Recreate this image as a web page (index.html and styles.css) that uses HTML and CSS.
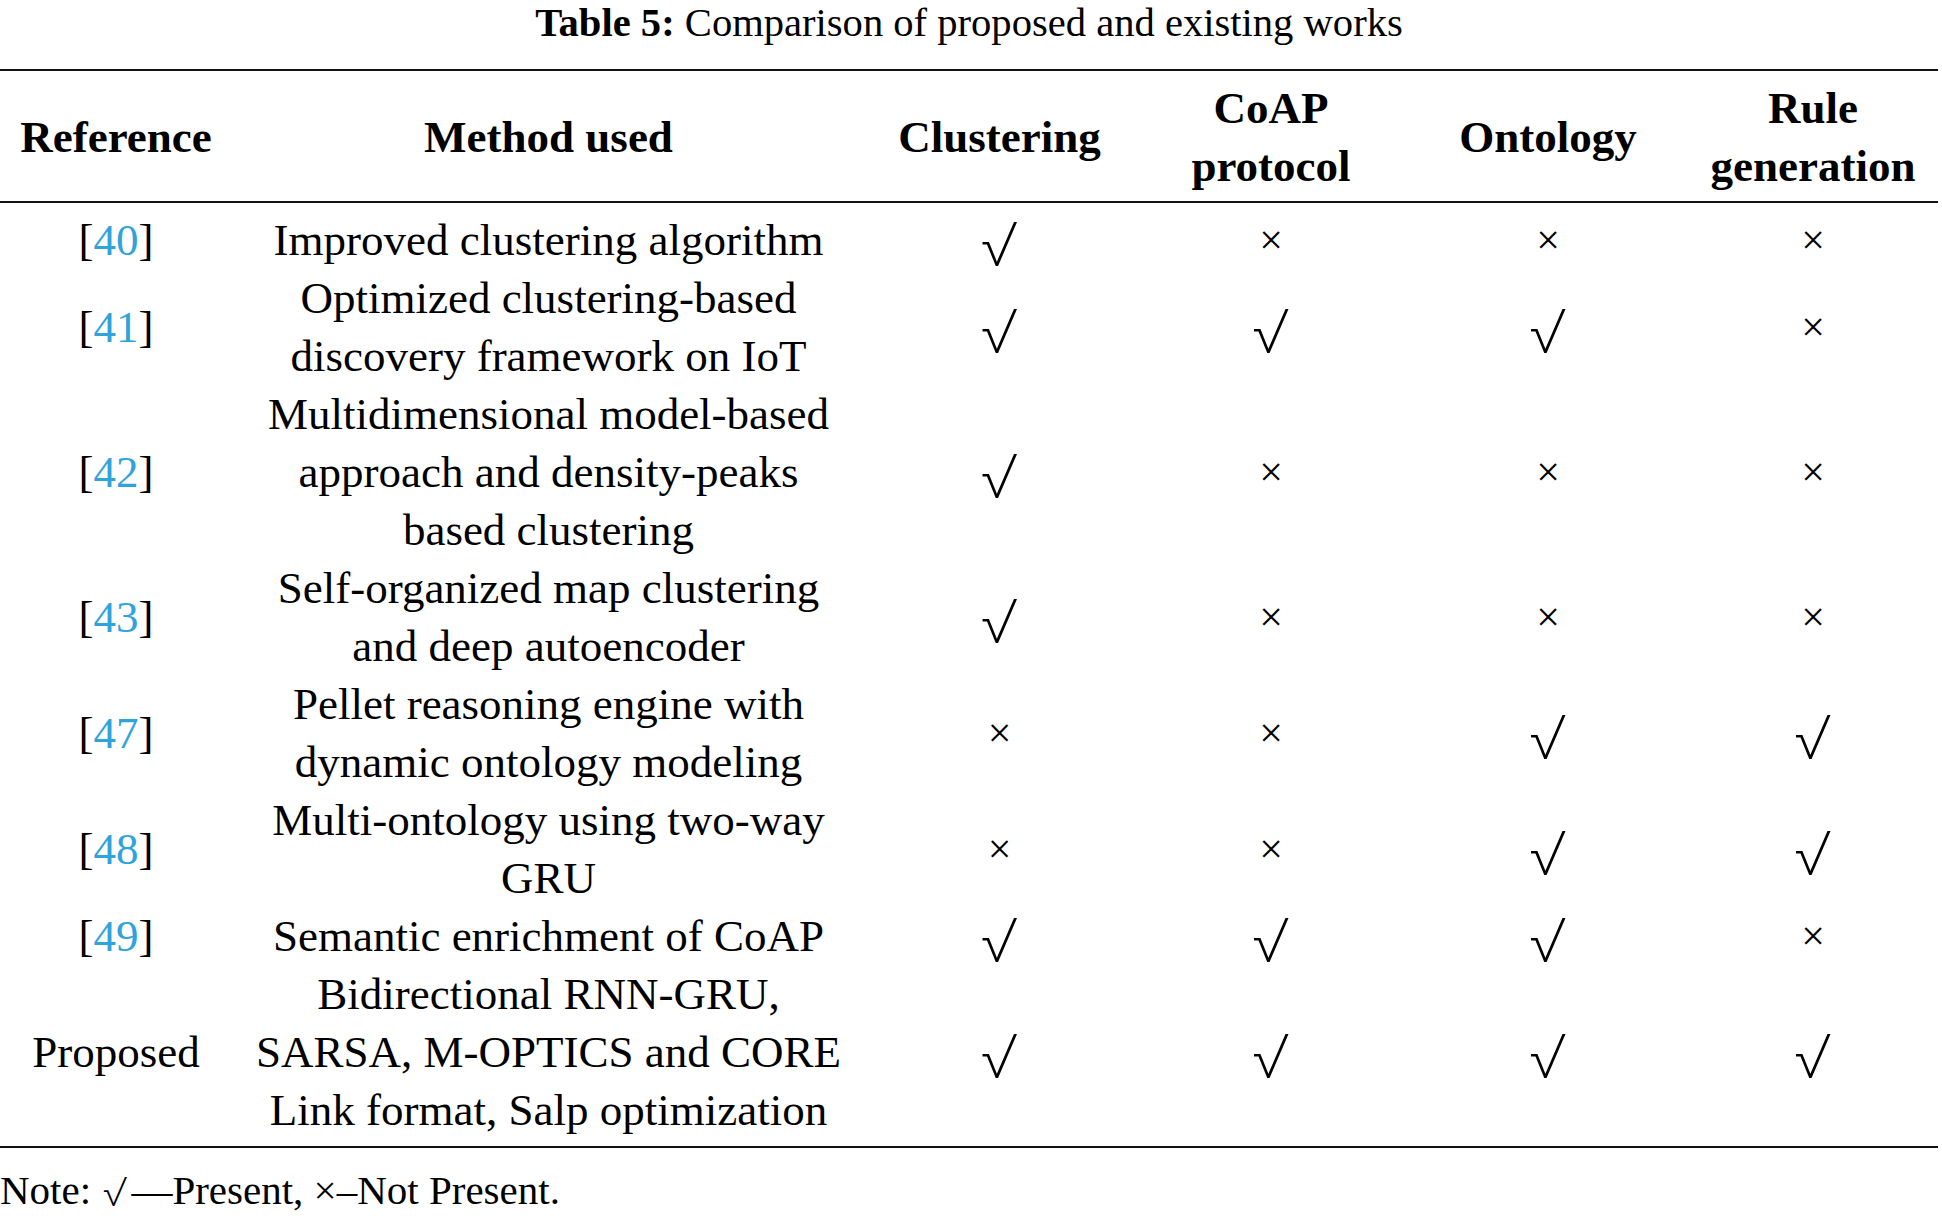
FILE: index.html
```html
<!DOCTYPE html>
<html lang="en">
<head>
<meta charset="utf-8">
<title>Table 5</title>
<link rel="stylesheet" href="styles.css">
</head>
<body>
<div class="page">
  <p class="caption"><b>Table 5:</b> Comparison of proposed and existing works</p>
  <table class="cmp">
    <colgroup>
      <col class="c-ref"><col class="c-method"><col class="c-clu"><col class="c-coap"><col class="c-ont"><col class="c-rule">
    </colgroup>
    <thead>
      <tr>
        <th>Reference</th>
        <th>Method used</th>
        <th>Clustering</th>
        <th>CoAP<br>protocol</th>
        <th>Ontology</th>
        <th>Rule<br>generation</th>
      </tr>
    </thead>
    <tbody>
      <tr class="first">
        <td>[<a class="ref">40</a>]</td>
        <td>Improved clustering algorithm</td>
        <td><span class="yes">√</span></td>
        <td><span class="no">×</span></td>
        <td><span class="no">×</span></td>
        <td><span class="no">×</span></td>
      </tr>
      <tr>
        <td>[<a class="ref">41</a>]</td>
        <td>Optimized clustering-based<br>discovery framework on IoT</td>
        <td><span class="yes">√</span></td>
        <td><span class="yes">√</span></td>
        <td><span class="yes">√</span></td>
        <td><span class="no">×</span></td>
      </tr>
      <tr>
        <td>[<a class="ref">42</a>]</td>
        <td>Multidimensional model-based<br>approach and density-peaks<br>based clustering</td>
        <td><span class="yes">√</span></td>
        <td><span class="no">×</span></td>
        <td><span class="no">×</span></td>
        <td><span class="no">×</span></td>
      </tr>
      <tr>
        <td>[<a class="ref">43</a>]</td>
        <td>Self-organized map clustering<br>and deep autoencoder</td>
        <td><span class="yes">√</span></td>
        <td><span class="no">×</span></td>
        <td><span class="no">×</span></td>
        <td><span class="no">×</span></td>
      </tr>
      <tr>
        <td>[<a class="ref">47</a>]</td>
        <td>Pellet reasoning engine with<br>dynamic ontology modeling</td>
        <td><span class="no">×</span></td>
        <td><span class="no">×</span></td>
        <td><span class="yes">√</span></td>
        <td><span class="yes">√</span></td>
      </tr>
      <tr>
        <td>[<a class="ref">48</a>]</td>
        <td>Multi-ontology using two-way<br>GRU</td>
        <td><span class="no">×</span></td>
        <td><span class="no">×</span></td>
        <td><span class="yes">√</span></td>
        <td><span class="yes">√</span></td>
      </tr>
      <tr>
        <td>[<a class="ref">49</a>]</td>
        <td>Semantic enrichment of CoAP</td>
        <td><span class="yes">√</span></td>
        <td><span class="yes">√</span></td>
        <td><span class="yes">√</span></td>
        <td><span class="no">×</span></td>
      </tr>
      <tr class="last">
        <td>Proposed</td>
        <td>Bidirectional RNN-GRU,<br>SARSA, M-OPTICS and CORE<br>Link format, Salp optimization</td>
        <td><span class="yes">√</span></td>
        <td><span class="yes">√</span></td>
        <td><span class="yes">√</span></td>
        <td><span class="yes">√</span></td>
      </tr>
    </tbody>
  </table>
  <p class="note">Note: <span class="yes-s">√</span>—Present, ×–Not Present.</p>
</div>
</body>
</html>
```

FILE: styles.css
```css
html, body {
  margin: 0;
  padding: 0;
  background: #ffffff;
}

body {
  font-family: "Liberation Serif", "Times New Roman", serif;
  color: #000000;
}

.page {
  width: 1938px;
}

.caption {
  margin: 0;
  font-size: 40.6px;
  line-height: 45px;
  text-align: center;
  white-space: nowrap;
}

.cmp {
  margin-top: 24px;
  width: 1938px;
  table-layout: fixed;
  border-collapse: collapse;
  border-top: 2px solid #111;
  border-bottom: 2px solid #111;
}

.c-ref { width: 232px; }
.c-method { width: 633px; }
.c-clu { width: 269px; }
.c-coap { width: 274px; }
.c-ont { width: 280px; }
.c-rule { width: 250px; }

.cmp th,
.cmp td {
  padding: 0;
  font-size: 45px;
  line-height: 58px;
  text-align: center;
  vertical-align: middle;
  white-space: nowrap;
}

.cmp thead th {
  font-weight: bold;
  padding-top: 8px;
  padding-bottom: 6px;
  border-bottom: 2px solid #111;
}

.cmp tbody tr.first td {
  padding-top: 8px;
}

.cmp tbody tr.last td {
  padding-bottom: 7px;
}

.ref {
  color: #2fa3dc;
  text-decoration: none;
}

.yes {
  display: inline-block;
  height: 58px;
  line-height: 66px;
  vertical-align: top;
  font-family: "Inter", "Lato", sans-serif;
  font-weight: 200;
  font-size: 60px;
}

.no {
  display: inline-block;
  height: 58px;
  line-height: 58px;
  vertical-align: top;
  font-family: "Liberation Serif", serif;
  font-size: 42px;
}

.note {
  margin: 20px 0 0 0;
  font-size: 41px;
  line-height: 44px;
  white-space: nowrap;
}

.yes-s {
  font-family: "Inter", "Lato", sans-serif;
  font-weight: 200;
  font-size: 40px;
  line-height: 40px;
  vertical-align: -2px;
  margin: 0 4px 0 2px;
}
```
